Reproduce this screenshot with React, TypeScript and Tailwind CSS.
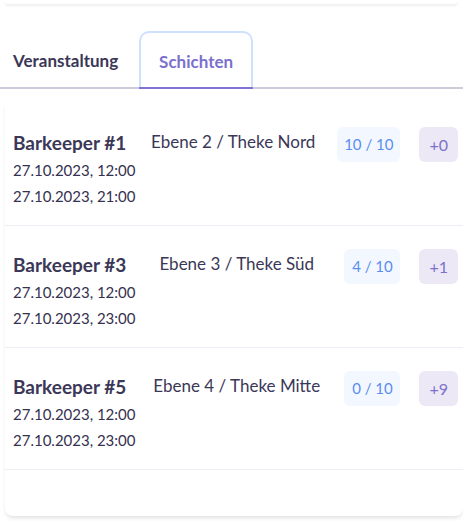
const SHIFTS = [
  { title: 'Barkeeper #1', start: '27.10.2023, 12:00', end: '27.10.2023, 21:00', place: 'Ebene 2 / Theke Nord', filled: '10 / 10', extra: '+0' },
  { title: 'Barkeeper #3', start: '27.10.2023, 12:00', end: '27.10.2023, 23:00', place: 'Ebene 3 / Theke Süd', filled: '4 / 10', extra: '+1' },
  { title: 'Barkeeper #5', start: '27.10.2023, 12:00', end: '27.10.2023, 23:00', place: 'Ebene 4 / Theke Mitte', filled: '0 / 10', extra: '+9' },
];

export default function App() {
  return (
    <div className="min-h-screen bg-white text-[#3b3757]" style={{ fontFamily: 'Lato, "Noto Sans", sans-serif' }}>
      {/* bottom edge of the card above */}
      <div className="mx-[5px] h-[4px] rounded-b-lg bg-white shadow-[0_2px_3px_rgba(0,0,0,0.07)]"></div>

      {/* Tabs */}
      <div className="mt-[27px] flex h-[58px] items-stretch border-b-2 border-[#cfcbdc] pl-[13px]">
        <button className="flex items-center pt-[3px] text-[17px] font-bold text-[#3b3757]">Veranstaltung</button>
        <button className="relative -mb-[2px] ml-[21px] flex w-[114px] items-center justify-center rounded-t-[10px] border-2 border-b-0 border-[#cfe0ff] pt-[2px] text-[17px] font-bold text-[#7b70cc]">
          Schichten
          <span className="absolute -left-[2px] -right-[2px] bottom-0 h-[2px] bg-[#7f73d6]"></span>
        </button>
      </div>

      {/* Shift rows */}
      <div className="mt-[15px] ml-[5px] rounded-b-lg pb-[46px] shadow-[0_3px_4px_-1px_rgba(0,0,0,0.12)]">
        {SHIFTS.map((s) => (
          <div key={s.title} className="flex items-start border-b border-[#ecedf5] pl-[8px] pr-[5px] pt-[25px] pb-[16px]">
            <div className="w-[130px] whitespace-nowrap">
              <div className="text-[19px] font-bold leading-[28px]">{s.title}</div>
              <div className="text-[15px] leading-[26px] text-[#353150]">{s.start}</div>
              <div className="text-[15px] leading-[26px] text-[#353150]">{s.end}</div>
            </div>
            <div className="mr-[14px] flex-1 whitespace-nowrap text-center text-[17px] leading-[26px]">{s.place}</div>
            <div className="-mt-[2px] flex h-[35px] min-w-[56px] items-center justify-center rounded-md bg-[#f3f7ff] px-[7px] text-[15px] text-[#5a8ef0]">{s.filled}</div>
            <div className="-mt-[2px] ml-[19px] flex h-[35px] items-center rounded-md bg-[#ece8f6] px-[10px] text-[16px] text-[#7b70cc]">{s.extra}</div>
          </div>
        ))}
      </div>
    </div>
  );
}
